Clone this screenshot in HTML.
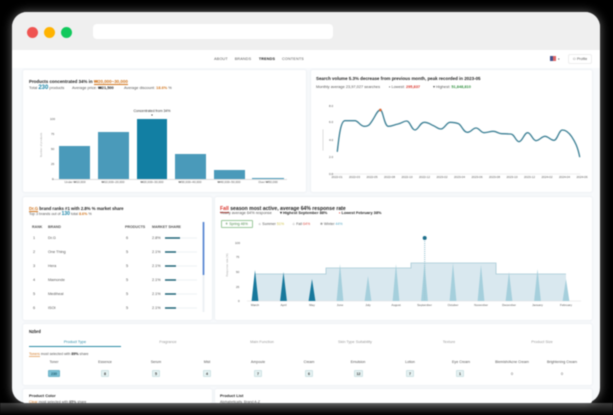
<!DOCTYPE html>
<html><head><meta charset="utf-8"><style>
html,body{margin:0;padding:0;background:#000}
body{width:613px;height:415px;overflow:hidden;position:relative;font-family:"Liberation Sans",sans-serif;color:#222}
#w{position:absolute;left:0;top:0;width:613px;height:415px;filter:blur(.45px);overflow:hidden}
.win{position:absolute;left:12px;top:12px;width:588px;height:391px;background:#f7f9fb;border-radius:15px;box-shadow:0 0 10px rgba(255,255,255,.4);overflow:hidden}
.bar{position:absolute;left:12px;top:12px;width:588px;height:38px;background:#efefef;border-radius:15px 15px 0 0}
.nav{position:absolute;left:12px;top:50px;width:588px;height:18px;background:#fff}
.c{position:absolute;background:#fff;border-radius:2px;box-shadow:0 0 2px rgba(120,140,160,.18)}
.d{position:absolute;border-radius:50%;width:11px;height:11px;top:26.5px}
.t{position:absolute;white-space:nowrap;line-height:0;font-size:3.6px;color:#555}
.m{transform:translateX(-50%)}
.h{font-size:4.45px;font-weight:bold;color:#222}
.s{font-size:3.9px;color:#555}
.o{color:#d0741c}.g{color:#999}
.bk{position:absolute;background:#4a9aba}
.sq{position:absolute;width:8px;height:7px;top:370px;background:#e6f2f2;border:.5px solid #cfe3e5;box-sizing:border-box;border-radius:1px}
svg{position:absolute;left:0;top:0}
.fade{position:absolute;left:0;top:403px;width:613px;height:12px;background:linear-gradient(#3a3a3a,#000)}
</style></head><body><div id="w">
<div class="fade"></div>
<div class="win"></div>
<div class="bar"></div>
<div class="nav"></div>
<div class="d" style="left:26.5px;background:#ef5350"></div>
<div class="d" style="left:43.5px;background:#ffb300"></div>
<div class="d" style="left:60.5px;background:#10c95c"></div>
<div style="position:absolute;left:93px;top:24px;width:240px;height:15px;background:#fff;border-radius:4px"></div>

<span class="t m" style="left:221px;top:59px;font-size:3.7px;letter-spacing:.2px">ABOUT</span>
<span class="t m" style="left:243px;top:59px;font-size:3.7px;letter-spacing:.2px">BRANDS</span>
<span class="t m" style="left:267px;top:59px;font-size:3.7px;letter-spacing:.2px;font-weight:bold;color:#222">TRENDS</span>
<span class="t m" style="left:293px;top:59px;font-size:3.7px;letter-spacing:.2px">CONTENTS</span>
<div style="position:absolute;left:550px;top:56px;width:6px;height:5px;background:linear-gradient(90deg,#44508a 50%,#d66 50%)"></div>
<span class="t" style="left:558px;top:59px;font-size:3px">▾</span>
<div style="position:absolute;left:568px;top:54px;width:24px;height:10px;border:.5px solid #eee;box-sizing:border-box;border-radius:2px"></div>
<span class="t m" style="left:580px;top:59px;font-size:3.6px">⚇ Profile</span>

<!-- cards -->
<div class="c" style="left:23px;top:70px;width:283px;height:122px"></div>
<div class="c" style="left:311px;top:70px;width:281px;height:122px"></div>
<div class="c" style="left:23px;top:197px;width:189px;height:123px"></div>
<div class="c" style="left:215px;top:197px;width:377px;height:123px"></div>
<div class="c" style="left:23px;top:324px;width:569px;height:61px"></div>
<div class="c" style="left:23px;top:389px;width:189px;height:14px"></div>
<div class="c" style="left:215px;top:389px;width:377px;height:14px"></div>

<!-- card 1 -->
<span class="t h" style="left:29px;top:78.5px">Products concentrated 34% in <span class="o" style="border-bottom:.6px solid #d0741c;line-height:6px">₩20,000~30,000</span></span>
<span class="t s" style="left:29px;top:88px">Total <b style="font-size:6px;color:#1d86a8">230</b> products</span>
<span class="t s" style="left:72px;top:88px">Average price: <b style="color:#222">₩21,500</b></span>
<span class="t s" style="left:124px;top:88px">Average discount: <b class="o">18.6%</b> %</span>
<div class="bk" style="left:59px;top:146px;width:31px;height:33px"></div>
<div class="bk" style="left:98px;top:132px;width:31px;height:47px"></div>
<div class="bk" style="left:137px;top:119px;width:30px;height:60px;background:#127fa3"></div>
<div class="bk" style="left:175px;top:154px;width:31px;height:25px"></div>
<div class="bk" style="left:214px;top:170px;width:31px;height:9px"></div>
<div class="bk" style="left:252px;top:178px;width:32px;height:1px"></div>
<div style="position:absolute;left:52px;top:179px;width:235px;height:.5px;background:#ddd"></div>
<span class="t m" style="left:152px;top:111px;font-size:3.5px;color:#333">Concentrated from 34%</span>
<span class="t m" style="left:152px;top:114.5px;font-size:3px;color:#222">▾</span>
<span class="t" style="left:50px;top:119px;font-size:3px">100</span>
<span class="t" style="left:51px;top:134px;font-size:3px">75</span>
<span class="t" style="left:51px;top:149px;font-size:3px">50</span>
<span class="t" style="left:51px;top:164px;font-size:3px">25</span>
<span class="t" style="left:52px;top:179px;font-size:3px">0</span>
<span class="t" style="left:41px;top:145px;font-size:2.8px;color:#aaa;transform:translateX(-50%) rotate(-90deg)">Number of products</span>
<span class="t m" style="left:75px;top:182px;font-size:3px">Under ₩10,000</span>
<span class="t m" style="left:113px;top:182px;font-size:3px">₩10,000~20,000</span>
<span class="t m" style="left:152px;top:182px;font-size:3px">₩20,000~30,000</span>
<span class="t m" style="left:190px;top:182px;font-size:3px">₩30,000~40,000</span>
<span class="t m" style="left:229px;top:182px;font-size:3px">₩40,000~50,000</span>
<span class="t m" style="left:268px;top:182px;font-size:3px">Over ₩50,000</span>

<!-- card 2 -->
<span class="t h" style="left:316px;top:78.5px">Search volume 5.3% decrease from previous month, peak recorded in 2023-05</span>
<span class="t s" style="left:316px;top:87px">Monthly average 23,97,027 searches</span>
<span class="t s" style="left:389px;top:87px">▪ Lowest: <b style="color:#d9342b">295,837</b></span>
<span class="t s" style="left:433px;top:87px">▾ Highest: <b style="color:#2f8f3e">51,848,810</b></span>
<svg width="613" height="415"><g transform="translate(305,90) scale(.3333)">
<path fill="none" stroke="#3d8095" stroke-width="4" stroke-linejoin="round" stroke-linecap="round" d="M97 184C101 150 106 92 120 92S140 92 150 92S165 109 178 109S194 104 203 90S218 60 226 60S238 109 250 109S265 105 279 102S295 93 305 93S320 120 330 120S345 97 358 97S375 103 385 107S398 117 408 117S425 97 435 97S450 97 460 101S475 127 487 127S503 114 513 114S527 128 537 128S555 124 565 124S580 131 590 131S605 132 617 132S632 155 642 155S658 128 668 128S683 152 693 152S710 139 720 139S737 151 747 151S762 120 772 120S790 125 800 140S818 170 824 200"/>
<circle cx="226" cy="60" r="4" fill="#d8693a"/>
<path d="M78 252H826" stroke="#ddd" stroke-width="1.5"/>
<path d="M54 118V182" stroke="#ccc" stroke-width="2"/>
</g>
<!-- area chart -->
<path d="M255 301V274H326V268H411V263H496V274H566V301Z" fill="#d9e8ef"/>
<path d="M255 274H326V268H411V263H496V274H566" fill="none" stroke="#a6c9d5" stroke-width=".8"/>
<path d="M247 301H581" stroke="#ddd" stroke-width=".5"/>
<path d="M251.6 301L255 270L258.4 301ZM280.1 301L283.5 272L286.9 301ZM308.6 301L312 279L315.4 301Z" fill="#17789c"/>
<path d="M336.6 301L340 264L343.4 301ZM364.6 301L368 276L371.4 301ZM392.6 301L396 264L399.4 301ZM421.1 301L424.5 263L427.9 301ZM449.6 301L453 263L456.4 301ZM477.6 301L481 265L484.4 301ZM505.6 301L509 272L512.4 301ZM534.1 301L537.5 269L540.9 301ZM562.6 301L566 279L569.4 301Z" fill="#a5cfdc"/>
<path d="M424.7 241V300" stroke="#9cc6d3" stroke-width="1.2" stroke-dasharray="1 1"/>
<circle cx="424.7" cy="238" r="2" fill="#1d6f8c"/>
</svg>
<span class="t" style="left:329px;top:106px;font-size:3px">8.0</span>
<span class="t" style="left:329px;top:122px;font-size:3px">6.0</span>
<span class="t" style="left:329px;top:140px;font-size:3px">4.0</span>
<span class="t" style="left:329px;top:157px;font-size:3px">2.0</span>
<span class="t" style="left:329px;top:174px;font-size:3px">0.0</span>
<span class="t m" style="left:337px;top:177px;font-size:3px">2022-01</span>
<span class="t m" style="left:354.5px;top:177px;font-size:3px">2022-03</span>
<span class="t m" style="left:372px;top:177px;font-size:3px">2022-05</span>
<span class="t m" style="left:389.5px;top:177px;font-size:3px">2022-08</span>
<span class="t m" style="left:407px;top:177px;font-size:3px">2022-10</span>
<span class="t m" style="left:424.5px;top:177px;font-size:3px">2022-12</span>
<span class="t m" style="left:442px;top:177px;font-size:3px">2023-02</span>
<span class="t m" style="left:459.5px;top:177px;font-size:3px">2023-04</span>
<span class="t m" style="left:477px;top:177px;font-size:3px">2023-06</span>
<span class="t m" style="left:494.5px;top:177px;font-size:3px">2023-08</span>
<span class="t m" style="left:512px;top:177px;font-size:3px">2023-10</span>
<span class="t m" style="left:529.5px;top:177px;font-size:3px">2023-12</span>
<span class="t m" style="left:547px;top:177px;font-size:3px">2024-02</span>
<span class="t m" style="left:564.5px;top:177px;font-size:3px">2024-04</span>
<span class="t m" style="left:582px;top:177px;font-size:3px">2024-06</span>

<!-- card 3 -->
<span class="t h" style="left:29px;top:205.5px;font-size:4.3px"><span class="o" style="border-bottom:.6px solid #d0741c;line-height:6px">Dr.G</span> brand ranks #1 with 2.8% % market share</span>
<span class="t s" style="left:29px;top:213.5px;font-size:3.7px">Top 3 brands out of <b style="font-size:5px;color:#1d86a8">130</b> total <b class="o">8.6%</b> %</span>
<span class="t" style="left:32px;top:227px;font-weight:bold">RANK</span>
<span class="t" style="left:48px;top:227px;font-weight:bold">BRAND</span>
<span class="t" style="left:125px;top:227px;font-weight:bold">PRODUCTS</span>
<span class="t" style="left:152px;top:227px;font-weight:bold">MARKET SHARE</span>
<span class="t" style="left:33px;top:238px;font-size:3.8px">1</span><span class="t" style="left:48px;top:238px;font-size:3.8px">Dr.G</span><span class="t" style="left:126px;top:238px;font-size:3.8px">6</span><span class="t" style="left:152px;top:238px;font-size:3.8px">2.8%</span>
<span class="t" style="left:33px;top:252px;font-size:3.8px">2</span><span class="t" style="left:48px;top:252px;font-size:3.8px">One Thing</span><span class="t" style="left:126px;top:252px;font-size:3.8px">5</span><span class="t" style="left:152px;top:252px;font-size:3.8px">2.1%</span>
<span class="t" style="left:33px;top:266px;font-size:3.8px">3</span><span class="t" style="left:48px;top:266px;font-size:3.8px">Hera</span><span class="t" style="left:126px;top:266px;font-size:3.8px">5</span><span class="t" style="left:152px;top:266px;font-size:3.8px">2.1%</span>
<span class="t" style="left:33px;top:280px;font-size:3.8px">4</span><span class="t" style="left:48px;top:280px;font-size:3.8px">Mamonde</span><span class="t" style="left:126px;top:280px;font-size:3.8px">5</span><span class="t" style="left:152px;top:280px;font-size:3.8px">2.1%</span>
<span class="t" style="left:33px;top:294px;font-size:3.8px">5</span><span class="t" style="left:48px;top:294px;font-size:3.8px">Mediheal</span><span class="t" style="left:126px;top:294px;font-size:3.8px">5</span><span class="t" style="left:152px;top:294px;font-size:3.8px">2.1%</span>
<span class="t" style="left:33px;top:308px;font-size:3.8px">6</span><span class="t" style="left:48px;top:308px;font-size:3.8px">ISOI</span><span class="t" style="left:126px;top:308px;font-size:3.8px">5</span><span class="t" style="left:152px;top:308px;font-size:3.8px">2.1%</span>
<svg width="613" height="415">
<path d="M165 238H197M165 252H197M165 266H197M165 280H197M165 294H197M165 308H197" stroke="#eef2f4" stroke-width="1"/>
<path d="M165 238H180M165 252H176M165 266H176M165 280H176M165 294H176M165 308H176" stroke="#1f6478" stroke-width="1.6"/>
<path d="M203.5 222V312" stroke="#eef1f4" stroke-width="2"/>
<path d="M203.5 222V275" stroke="#4d7fd0" stroke-width="1.6"/>
</svg>

<!-- card 4 -->
<span class="t h" style="left:220px;top:205.5px;font-size:5.1px"><span style="color:#d9342b;border-bottom:.6px solid #d9342b;line-height:6px">Fall</span> season most active, average 64% response rate</span>
<span class="t s" style="left:220px;top:213px">Yearly average 64% response</span>
<span class="t s" style="left:280px;top:213px;color:#222;font-weight:bold">▾ Highest September 88%</span>
<span class="t s" style="left:339px;top:213px;color:#222;font-weight:bold"><span style="color:#d9342b">▪</span> Lowest February 38%</span>
<div style="position:absolute;left:221px;top:219.5px;width:32px;height:8px;border:.5px solid #9cc99c;box-sizing:border-box;border-radius:1px"></div>
<span class="t" style="left:225px;top:223.5px;color:#4a8a4a">⚘ Spring 46%</span>
<span class="t" style="left:258px;top:223.5px">☼ Summer <span style="color:#cfc24a">51%</span></span>
<span class="t" style="left:292px;top:223.5px">♧ Fall <span style="color:#d9534a">64%</span></span>
<span class="t" style="left:320px;top:223.5px">❄ Winter <span style="color:#5aa9c5">44%</span></span>
<span class="t" style="left:235px;top:243px;font-size:3px">100</span>
<span class="t" style="left:236px;top:257px;font-size:3px">75</span>
<span class="t" style="left:236px;top:272px;font-size:3px">50</span>
<span class="t" style="left:236px;top:287px;font-size:3px">25</span>
<span class="t" style="left:238px;top:301px;font-size:3px">0</span>
<span class="t" style="left:227px;top:265px;font-size:2.8px;color:#aaa;transform:translateX(-50%) rotate(-90deg)">Response rate (%)</span>
<span class="t m" style="left:255px;top:304.5px;font-size:3px">March</span>
<span class="t m" style="left:283.5px;top:304.5px;font-size:3px">April</span>
<span class="t m" style="left:312px;top:304.5px;font-size:3px">May</span>
<span class="t m" style="left:340px;top:304.5px;font-size:3px">June</span>
<span class="t m" style="left:368px;top:304.5px;font-size:3px">July</span>
<span class="t m" style="left:396px;top:304.5px;font-size:3px">August</span>
<span class="t m" style="left:424.5px;top:304.5px;font-size:3px">September</span>
<span class="t m" style="left:453px;top:304.5px;font-size:3px">October</span>
<span class="t m" style="left:481px;top:304.5px;font-size:3px">November</span>
<span class="t m" style="left:509px;top:304.5px;font-size:3px">December</span>
<span class="t m" style="left:537.5px;top:304.5px;font-size:3px">January</span>
<span class="t m" style="left:566px;top:304.5px;font-size:3px">February</span>

<!-- card 5 -->
<span class="t h" style="left:29px;top:332px;font-size:4.2px">Nzbrd</span>
<span class="t m" style="left:75px;top:342px;font-size:3.8px;color:#2a8aa5">Product Type</span>
<span class="t m g" style="left:168px;top:342px;font-size:3.8px">Fragrance</span>
<span class="t m g" style="left:262px;top:342px;font-size:3.8px">Main Function</span>
<span class="t m g" style="left:355px;top:342px;font-size:3.8px">Skin Type Suitability</span>
<span class="t m g" style="left:449px;top:342px;font-size:3.8px">Texture</span>
<span class="t m g" style="left:542px;top:342px;font-size:3.8px">Product Size</span>
<div style="position:absolute;left:29px;top:346px;width:92px;height:.8px;background:#2a8aa5"></div>
<span class="t" style="left:29px;top:351.5px;font-size:3.6px"><span class="o" style="border-bottom:.6px solid #e9b27c;line-height:5px">Toners</span> most selected with <b style="color:#222">89%</b> share</span>
<span class="t m" style="left:54px;top:362px">Toner</span>
<span class="t m" style="left:105px;top:362px">Essence</span>
<span class="t m" style="left:156px;top:362px">Serum</span>
<span class="t m" style="left:207px;top:362px">Mist</span>
<span class="t m" style="left:258px;top:362px">Ampoule</span>
<span class="t m" style="left:309px;top:362px">Cream</span>
<span class="t m" style="left:358px;top:362px">Emulsion</span>
<span class="t m" style="left:410px;top:362px">Lotion</span>
<span class="t m" style="left:461px;top:362px">Eye Cream</span>
<span class="t m" style="left:512px;top:362px">Blemish/Acne Cream</span>
<span class="t m" style="left:562px;top:362px">Brightening Cream</span>
<div class="sq" style="left:48px;width:12px;background:#7cc0d4;border-color:#6fb3c8"></div>
<div class="sq" style="left:101px"></div><div class="sq" style="left:152px"></div><div class="sq" style="left:203px"></div><div class="sq" style="left:254px"></div><div class="sq" style="left:305px"></div>
<div class="sq" style="left:354px;width:9px"></div><div class="sq" style="left:406px"></div><div class="sq" style="left:456px"></div>
<span class="t m" style="left:54px;top:373.5px;color:#1f5f72;font-weight:bold">230</span>
<span class="t m" style="left:105px;top:373.5px;color:#333;font-weight:bold">8</span>
<span class="t m" style="left:156px;top:373.5px;color:#333;font-weight:bold">5</span>
<span class="t m" style="left:207px;top:373.5px;color:#333;font-weight:bold">4</span>
<span class="t m" style="left:258px;top:373.5px;color:#333;font-weight:bold">7</span>
<span class="t m" style="left:309px;top:373.5px;color:#333;font-weight:bold">6</span>
<span class="t m" style="left:358.5px;top:373.5px;color:#333;font-weight:bold">12</span>
<span class="t m" style="left:410px;top:373.5px;color:#333;font-weight:bold">7</span>
<span class="t m" style="left:460px;top:373.5px;color:#333;font-weight:bold">1</span>
<span class="t m" style="left:512px;top:373.5px">0</span>
<span class="t m" style="left:562px;top:373.5px">0</span>

<!-- card 6/7 -->
<span class="t h" style="left:29px;top:396px;font-size:4px">Product Color</span>
<span class="t" style="left:29px;top:402px"><span class="o">Clear</span> most selected with <b>85%</b> share</span>
<span class="t h" style="left:220px;top:396px;font-size:4px">Product List</span>
<span class="t" style="left:220px;top:402px">Alphabetically, Brand A-Z</span>
</div></body></html>
